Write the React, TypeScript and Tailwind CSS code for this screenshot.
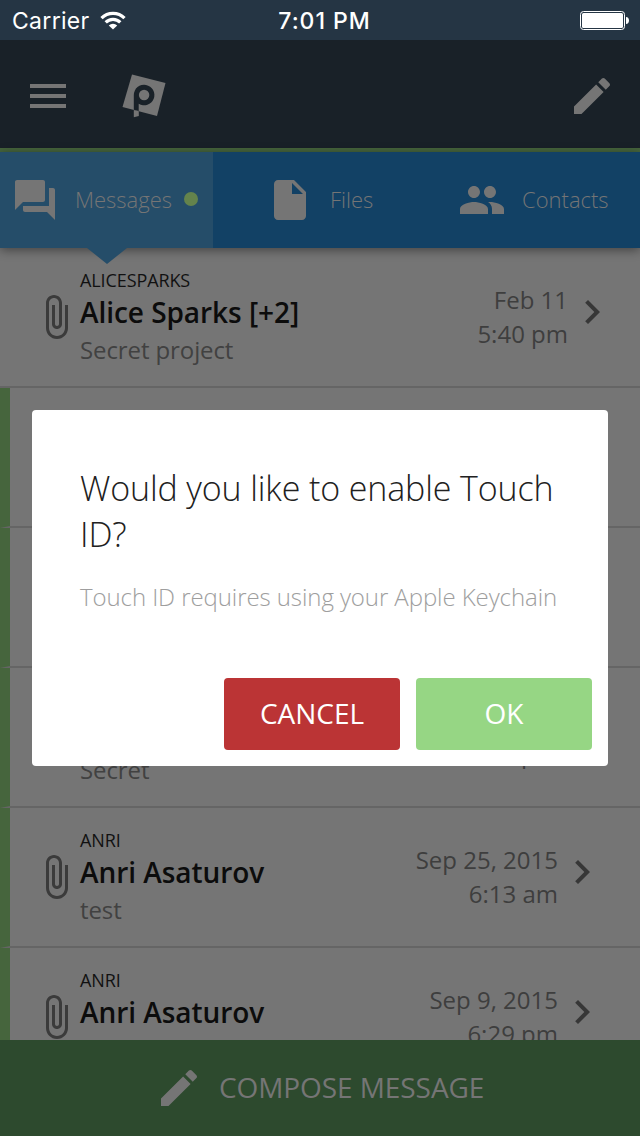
import React from "react";

const ICONS = {
  menu: "M3 18h18v-2H3v2zm0-5h18v-2H3v2zm0-7v2h18V6H3z",
  edit: "M3 17.25V21h3.75L17.81 9.94l-3.75-3.75L3 17.25zM20.71 7.04c.39-.39.39-1.02 0-1.41l-2.34-2.34c-.39-.39-1.02-.39-1.41 0l-1.83 1.83 3.75 3.75 1.83-1.83z",
  forum:
    "M21 6h-2v9H6v2c0 .55.45 1 1 1h11l4 4V7c0-.55-.45-1-1-1zm-4 6V3c0-.55-.45-1-1-1H3c-.55 0-1 .45-1 1v14l4-4h10c.55 0 1-.45 1-1z",
  file: "M6 2c-1.1 0-1.99.9-1.99 2L4 20c0 1.1.89 2 1.99 2H18c1.1 0 2-.9 2-2V8l-6-6H6zm7 7V3.5L18.5 9H13z",
  group:
    "M16 11c1.66 0 2.99-1.34 2.99-3S17.66 5 16 5c-1.66 0-3 1.34-3 3s1.34 3 3 3zm-8 0c1.66 0 2.99-1.34 2.99-3S9.66 5 8 5C6.34 5 5 6.34 5 8s1.34 3 3 3zm0 2c-2.33 0-7 1.17-7 3.5V19h14v-2.5c0-2.33-4.67-3.5-7-3.5zm8 0c-.29 0-.62.02-.97.05 1.16.84 1.97 1.97 1.97 3.45V19h6v-2.5c0-2.33-4.67-3.5-7-3.5z",
  attach:
    "M16.5 6v11.5c0 2.21-1.79 4-4 4s-4-1.79-4-4V5c0-1.38 1.12-2.5 2.5-2.5s2.5 1.12 2.5 2.5v10.5c0 .55-.45 1-1 1s-1-.45-1-1V6H10v9.5c0 1.38 1.12 2.5 2.5 2.5s2.5-1.12 2.5-2.5V5c0-2.21-1.79-4-4-4S7 2.79 7 5v12.5c0 3.04 2.46 5.5 5.5 5.5s5.5-2.46 5.5-5.5V6h-1.5z",
  chevron: "M10 6L8.59 7.41 13.17 12l-4.58 4.59L10 18l6-6z",
};

function Icon({ name, className = "" }: { name: keyof typeof ICONS; className?: string }) {
  return (
    <svg viewBox="0 0 24 24" className={`size-12 shrink-0 fill-current ${className}`}>
      <path d={ICONS[name]} />
    </svg>
  );
}

function StatusBar() {
  return (
    <div className="grid h-10 grid-cols-3 items-center bg-[#253544] pr-[11px] pl-[12px] font-['Inter'] text-[23px] text-white">
      <div className="flex items-center gap-[10px]">
        <span className="pt-0.5 tracking-[0.3px]">Carrier</span>
        <svg viewBox="0 0 26 19" className="h-[19px] w-[26px]" fill="none" stroke="white" strokeWidth="3.2">
          <path d="M1.5 7.2a16 16 0 0 1 23 0" />
          <path d="M5.7 11.4a10.2 10.2 0 0 1 14.6 0" />
          <path d="M8.8 14.4a6 6 0 0 1 8.4 0L13 18.6z" fill="white" stroke="none" />
        </svg>
      </div>
      <div className="pt-0.5 pl-[8px] text-center font-medium tracking-[0.95px] whitespace-nowrap">7:01 PM</div>
      <div className="flex justify-end">
        <svg viewBox="0 0 49 19" className="h-[19px] w-[49px]">
          <rect x="0.5" y="0.5" width="44" height="18" rx="3" fill="none" stroke="white" />
          <rect x="2" y="2" width="41" height="15" rx="1.5" fill="white" />
          <path d="M46 6c4 0 4 7 0 7z" fill="white" />
        </svg>
      </div>
    </div>
  );
}

function Logo() {
  return (
    <svg viewBox="0 0 44 44" className="ml-[50px] h-11 w-11">
      <path d="M10 0.5L43.5 9L35 42L0.5 33z" fill="#757575" />
      <path d="M11.8 21a10.3 10.3 0 1 1 4.9 8.8V37l-4.9-1.3z" fill="#192128" />
      <circle cx="22.1" cy="21" r="5.2" fill="#757575" />
      <path d="M11.8 36L16.8 37.3V42L11.8 43.3z" fill="#757575" />
    </svg>
  );
}

type Message = { user: string; name: string; subject: string; date: string; time: string; unread?: boolean };

const MESSAGES: Message[] = [
  { user: "ALICESPARKS", name: "Alice Sparks [+2]", subject: "Secret project", date: "Feb 11", time: "5:40 pm" },
  { user: "", name: "", subject: "", date: "", time: "", unread: true },
  { user: "", name: "", subject: "", date: "", time: "", unread: true },
  { user: "", name: "", subject: "Secret", date: "", time: "5:12 pm", unread: true },
  { user: "ANRI", name: "Anri Asaturov", subject: "test", date: "Sep 25, 2015", time: "6:13 am", unread: true },
  { user: "ANRI", name: "Anri Asaturov", subject: "", date: "Sep 9, 2015", time: "6:29 pm", unread: true },
];

function Row({ m }: { m: Message }) {
  return (
    <div
      className={`flex h-[140px] shrink-0 items-start border-b-2 border-b-[#656565] ${
        m.unread ? "border-l-[10px] border-l-[#46653d] pr-[34px] pl-[22px]" : "pr-6 pl-8"
      }`}
    >
      <div className="mt-[45px] size-12 text-[#3b3b3b]">{m.name && <Icon name="attach" />}</div>
      <div className="flex flex-1 flex-col pt-[19px]">
        <div className="h-[26px] text-[18px] leading-[26px] tracking-[-0.1px] text-[#111]">{m.user}</div>
        <div className="h-[39px] text-[28px] leading-[38px] font-semibold tracking-[-0.05px] text-[#0c0c0c]">{m.name}</div>
        <div className="h-9 text-[24px] leading-9 tracking-[-0.1px] text-[#414141]">{m.subject}</div>
      </div>
      <div className="pt-[35px] text-right text-[24px] leading-[34px] text-[#3e3e3e]">
        <div className="h-[34px]">{m.date}</div>
        <div className="h-[34px]">{m.time}</div>
      </div>
      <div className="mt-10 size-12 text-[#373737]">{m.date && <Icon name="chevron" />}</div>
    </div>
  );
}

export default function App() {
  return (
    <div className="relative flex h-[1136px] w-[640px] flex-col overflow-hidden bg-[#757575] font-['Open_Sans','Noto_Sans',sans-serif]">
      <StatusBar />
      <header className="flex h-28 items-center border-b-4 border-[#46653d] bg-[#192128] px-6 pt-1 text-[#757575]">
        <Icon name="menu" />
        <Logo />
        <Icon name="edit" className="ml-auto" />
      </header>
      <nav className="relative z-10 flex h-24 bg-[#124165] text-[22px] font-light text-[#757575] shadow-[0_2px_10px_rgba(0,0,0,0.45)]">
        <div className="relative flex w-[213px] items-center bg-[#254d69] pl-[11px]">
          <Icon name="forum" />
          <span className="ml-4 pb-0.5">Messages</span>
          <span className="mb-[3px] ml-3 size-3.5 rounded-full bg-[#64834c]" />
          <svg viewBox="0 0 40 16" className="absolute top-24 left-[87px] h-4 w-10">
            <path d="M0 0H40L20 16z" fill="#254d69" />
          </svg>
        </div>
        <div className="flex w-[213px] items-center pl-[53px]">
          <Icon name="file" />
          <span className="ml-4 pb-0.5">Files</span>
        </div>
        <div className="flex flex-1 items-center pl-8">
          <Icon name="group" />
          <span className="ml-4 pb-0.5">Contacts</span>
        </div>
      </nav>
      <main className="flex h-[792px] flex-col overflow-hidden">
        {MESSAGES.map((m, i) => (
          <Row key={i} m={m} />
        ))}
      </main>
      <button className="flex h-24 items-center bg-[#2d4a2e] pl-[155px] text-[28px] text-[#757575]">
        <Icon name="edit" />
        <span className="ml-4 pb-0.5 tracking-[-0.08px]">COMPOSE MESSAGE</span>
      </button>

      <div className="absolute top-[410px] left-8 z-20 flex h-[356px] w-[576px] flex-col rounded bg-white">
        <h2 className="px-12 pt-[55px] text-[34px] leading-[46px] font-light tracking-[-0.13px] text-[#212121]">
          <span className="block whitespace-nowrap">Would you like to enable Touch</span>
          <span className="block">ID?</span>
        </h2>
        <p className="mt-5 px-12 text-[24px] leading-[40px] font-light tracking-[-0.08px] whitespace-nowrap text-[#9e9e9e]">
          Touch ID requires using your Apple Keychain
        </p>
        <div className="mt-auto flex justify-end gap-4 p-4 text-[28px] text-white">
          <button className="h-[72px] w-44 rounded bg-[#bb3435] pb-0.5">CANCEL</button>
          <button className="h-[72px] w-44 rounded bg-[#96d684] pb-0.5">OK</button>
        </div>
      </div>
    </div>
  );
}
